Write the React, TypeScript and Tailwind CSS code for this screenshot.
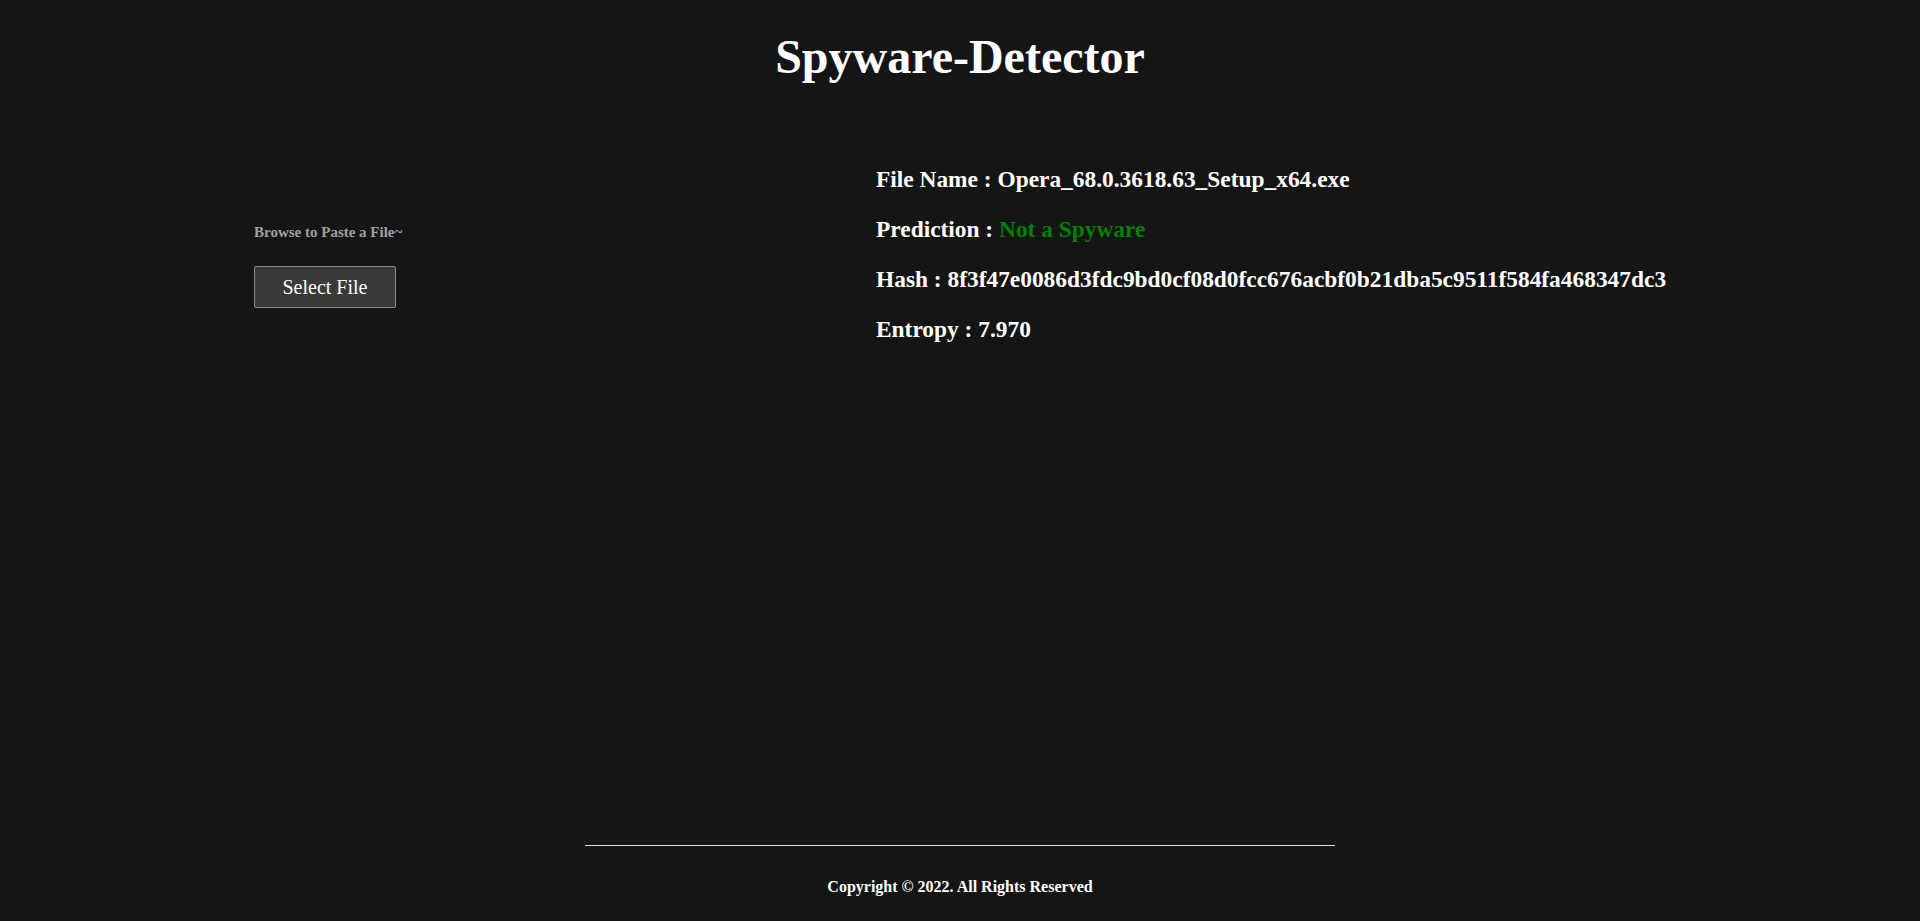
import React from "react";

export default function App() {
  return (
    <div className="h-[921px] overflow-hidden bg-[#151515] text-white flex flex-col" style={{ fontFamily: '"Liberation Serif", "Times New Roman", serif' }}>
      <h1 className="text-center font-bold text-[48px] leading-[60px] pt-[27px]">Spyware-Detector</h1>
      <div className="flex flex-1">
        <div className="w-[876px] pl-[254px] pt-[136px]">
          <p className="text-[15px] font-bold text-[#a0a0a0] leading-[18px]">Browse to Paste a File~</p>
          <button className="mt-[25px] w-[142px] h-[42px] bg-[#3a3a3a] border border-[#8a8a8a] rounded-[2px] text-[20px] text-white">Select File</button>
        </div>
        <div className="pt-[78px] flex flex-col gap-[22px] text-[23.4px] font-bold leading-[28px]">
          <p>File Name : Opera_68.0.3618.63_Setup_x64.exe</p>
          <p>Prediction : <span className="text-[#008000]">Not a Spyware</span></p>
          <p>Hash : 8f3f47e0086d3fdc9bd0cf08d0fcc676acbf0b21dba5c9511f584fa468347dc3</p>
          <p>Entropy : 7.970</p>
        </div>
      </div>
      <footer className="flex flex-col items-center pb-[22px]">
        <div className="w-[750px] h-px bg-[#e0e0e0]"></div>
        <p className="mt-[29px] text-[16px] font-bold">Copyright © 2022. All Rights Reserved</p>
      </footer>
    </div>
  );
}
